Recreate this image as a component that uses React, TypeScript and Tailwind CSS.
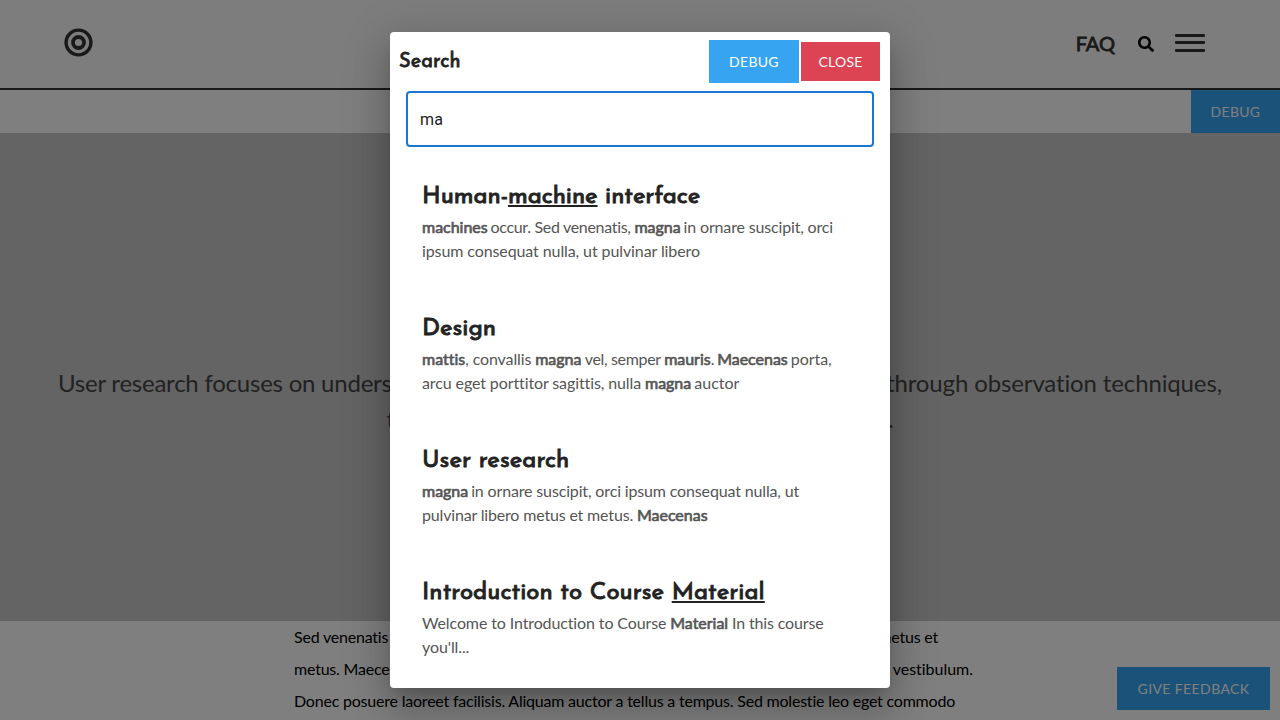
import { FaSearch } from "react-icons/fa";
import type { ReactNode } from "react";

function Strong({ children }: { children: ReactNode }) {
  return <b className="font-normal tracking-[-0.02px] [-webkit-text-stroke:0.65px_currentColor]">{children}</b>;
}

function Target() {
  return (
    <svg width="30" height="30" viewBox="0 0 30 30" fill="none" stroke="#333" className="shrink-0">
      <circle cx="15.5" cy="14.5" r="12.4" strokeWidth="3.4" />
      <circle cx="15.5" cy="14.5" r="5.5" strokeWidth="3.8" />
    </svg>
  );
}

function Match({ children }: { children: ReactNode }) {
  return <span className="underline decoration-2 underline-offset-[2px] [text-decoration-skip-ink:none]">{children}</span>;
}

function Result({ title, children }: { title: ReactNode; children: ReactNode }) {
  return (
    <li className="h-[132px]">
      <h2 className="h-[36px] pt-[2px] font-['Josefin_Sans','Lato',sans-serif] text-[24px] leading-[32px] font-normal whitespace-nowrap text-[#222] [-webkit-text-stroke:0.9px_currentColor]">
        {title}
      </h2>
      <p className="text-[16px] leading-[24px] whitespace-nowrap text-[#555]">{children}</p>
    </li>
  );
}

export default function App() {
  return (
    <div className="relative h-[720px] w-[1280px] overflow-hidden bg-white font-['Lato',sans-serif]">
      <header className="flex h-[90px] items-center border-b-2 border-[#333] bg-[#fafafa] pr-[75px] pb-[3px] pl-[63px]">
        <Target />
        <div className="ml-auto flex items-center">
          <span className="text-[20px] text-[#333] [-webkit-text-stroke:0.8px_currentColor]">FAQ</span>
          <FaSearch className="mt-[3px] ml-[23px] size-[16px] text-black" />
          <div className="ml-[21px] flex w-[30px] flex-col gap-[4.5px]">
            <i className="h-[3px] rounded-[1px] bg-[#333]" />
            <i className="h-[3px] rounded-[1px] bg-[#333]" />
            <i className="h-[3px] rounded-[1px] bg-[#333]" />
          </div>
        </div>
      </header>
      <div className="flex h-[43px] justify-end">
        <button className="h-[43px] w-[89px] bg-[#37a4f2] text-[14px] tracking-[0.3px] text-white">DEBUG</button>
      </div>
      <section className="flex h-[488px] flex-col items-center justify-center bg-[#c8c8c8] pt-[48px] text-[24px] leading-[36px] whitespace-nowrap text-[#444]">
        <p className="flex w-[1164px] justify-between">
          <span className="tracking-[-0.23px]">User research focuses on understanding user behaviors,</span>
          <span className="tracking-[-0.13px]">needs, and motivations through observation techniques,</span>
        </p>
        <p className="tracking-[-0.12px]">task analysis, and other feedback methodologies.</p>
      </section>
      <section className="ml-[294px] w-[679px] text-[16px] leading-[32px] tracking-[-0.21px] whitespace-nowrap text-black">
        <p className="flex w-[644px] justify-between">
          <span>Sed venenatis magna, in ornare suscipit, orci ipsum consequat nulla,</span>
          <span>ut pulvinar libero metus et</span>
        </p>
        <p className="flex justify-between">
          <span>metus. Maecenas porta, arcu eget porttitor sagittis, nulla magna auctor dolor</span>
          <span className="tracking-[-0.02px]">vestibulum.</span>
        </p>
        <p>Donec posuere laoreet facilisis. Aliquam auctor a tellus a tempus. Sed molestie leo eget commodo</p>
      </section>
      <button className="absolute right-[10px] bottom-[10px] h-[43px] w-[153px] bg-[#37a4f2] text-[14px] tracking-[0.4px] text-white">
        GIVE FEEDBACK
      </button>

      <div className="absolute inset-0 flex items-center justify-center bg-black/50">
        <div
          role="dialog"
          className="h-[656px] w-[500px] overflow-hidden rounded-[4px] bg-white shadow-[0_11px_15px_-7px_rgba(0,0,0,0.2),0_24px_38px_3px_rgba(0,0,0,0.14),0_9px_46px_8px_rgba(0,0,0,0.12)]"
        >
          <div className="flex h-[59px] items-center pr-[10px] pl-[9px]">
            <h1 className="font-['Josefin_Sans','Lato',sans-serif] text-[20px] leading-[28px] font-normal tracking-[0.1px] text-[#222] [-webkit-text-stroke:0.8px_currentColor]">
              Search
            </h1>
            <div className="ml-auto flex items-center gap-[2px]">
              <button className="h-[43px] w-[90px] bg-[#37a4f2] text-[14px] tracking-[0.3px] text-white">DEBUG</button>
              <button className="h-[39px] w-[79px] bg-[#dc4453] text-[14px] tracking-[0.2px] text-white">CLOSE</button>
            </div>
          </div>
          <div className="mx-[16px] flex h-[56px] items-center rounded-[4px] border-2 border-[#1976d2] px-[12px] pt-[2px] font-['Roboto',sans-serif] text-[16px] tracking-[0.15px] text-[#222]">
            ma
          </div>
          <ul className="px-[32px] pt-[32px]">
            <Result
              title={
                <span className="tracking-[-0.05px]">
                  Human-<Match>machine</Match> interface
                </span>
              }
            >
              <Strong>machines</Strong>
              <span className="-ml-[1px] tracking-[-0.31px]"> occur. Sed venenatis, </span>
              <Strong>magna</Strong>
              <span className="-ml-[1px] tracking-[-0.16px]"> in ornare suscipit, orci</span>
              <br />
              <span className="tracking-[-0.1px]">ipsum consequat nulla, ut pulvinar libero</span>
            </Result>
            <Result title="Design">
              <Strong>mattis</Strong>
              <span className="tracking-[-0.12px]">, convallis </span>
              <Strong>magna</Strong>
              <span className="tracking-[-0.35px]"> vel, semper </span>
              <Strong>mauris</Strong>
              <span className="tracking-[-0.7px]">. </span>
              <Strong>Maecenas</Strong>
              <span className="-ml-[1px] tracking-[-0.05px]"> porta,</span>
              <br />
              <span className="tracking-[-0.11px]">arcu eget porttitor sagittis, nulla </span>
              <Strong>magna</Strong>
              <span className="-ml-[1px] tracking-[-0.02px]"> auctor</span>
            </Result>
            <Result title={<span className="tracking-[0.06px]">User research</span>}>
              <Strong>magna</Strong>
              <span className="-ml-[1px] tracking-[-0.15px]"> in ornare suscipit, orci ipsum consequat nulla, ut</span>
              <br />
              <span className="tracking-[-0.17px]">pulvinar libero metus et metus. </span>
              <Strong>Maecenas</Strong>
            </Result>
            <Result
              title={
                <span className="tracking-[0.04px]">
                  Introduction to Course <Match>Material</Match>
                </span>
              }
            >
              <span className="tracking-[-0.12px]">Welcome to Introduction to Course </span>
              <Strong>Material</Strong>
              <span className="tracking-[-0.15px]"> In this course</span>
              <br />
              <span className="tracking-[-0.1px]">you'll...</span>
            </Result>
          </ul>
        </div>
      </div>
    </div>
  );
}
